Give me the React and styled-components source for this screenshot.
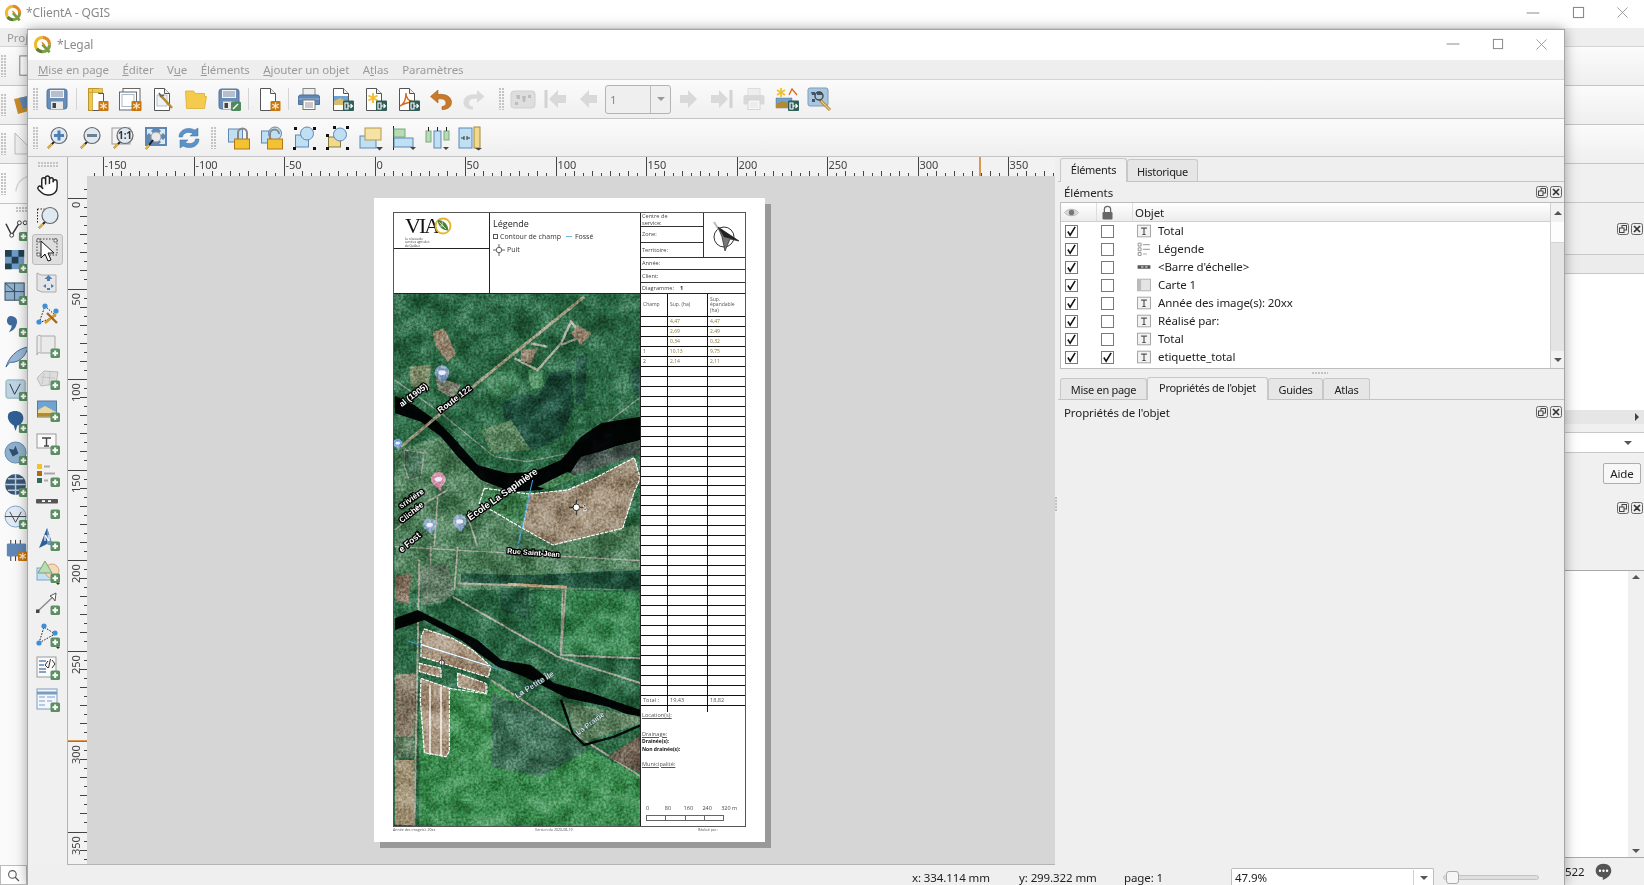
import React from "react";
import styled, { createGlobalStyle } from "styled-components";
import { Hand } from "lucide-react";

const GlobalStyle = createGlobalStyle`
  html, body { margin: 0; padding: 0; background: #efefef; overflow: hidden; }
  body { font-family: "Noto Sans", "Liberation Sans", sans-serif; font-size: 11.5px; letter-spacing: -0.1px; color: #222; }
  * { box-sizing: border-box; }
`;

/* ---------- window shells ---------- */
const Desktop = styled.div`
  position: relative;
  width: 1644px;
  height: 885px;
  overflow: hidden;
`;
const BaseWindow = styled.div`
  display: flex;
  flex-direction: column;
  width: 1644px;
  height: 885px;
  background: #f0f0f0;
`;
const TitleBar = styled.div`
  display: flex;
  align-items: center;
  background: #fff;
  height: ${(p) => p.$h}px;
  flex: none;
  padding-left: ${(p) => p.$pad}px;
  padding-bottom: ${(p) => p.$pb || 0}px;
  gap: ${(p) => p.$gap}px;
  color: #8b8b8b;
  font-size: 12px;
`;
const TitleText = styled.span`
  flex: 1;
`;
const WinButtons = styled.div`
  display: flex;
  align-items: center;
  gap: ${(p) => p.$gap}px;
  padding-right: ${(p) => p.$right}px;
`;
const Menu = styled.div`
  display: flex;
  align-items: center;
  flex: none;
  height: ${(p) => p.$h}px;
  background: #eeeeee;
  border-bottom: 1px solid #d4d4d4;
  color: #9a9a9a;
  padding-left: ${(p) => p.$pad}px;
`;
const MenuItem = styled.span`
  margin-right: ${(p) => p.$gap}px;
  u { text-underline-offset: 1px; }
`;
const BaseBand = styled.div`
  flex: none;
  height: 39px;
  background: linear-gradient(#fbfbfb, #efefef);
  border-bottom: 1px solid #c4c4c4;
  display: flex;
  align-items: center;
  padding-left: 1px;
  gap: ${(p) => p.$gap}px;
`;
const BaseMain = styled.div`
  flex: 1;
  display: flex;
  min-height: 0;
`;
const BaseLeft = styled.div`
  width: 120px;
  flex: none;
  display: flex;
  flex-direction: column;
  align-items: flex-start;
  background: linear-gradient(90deg, #fafafa, #efefef);
`;
const LeftBand = styled.div`
  width: 100%;
  height: 40px;
  flex: none;
  display: flex;
  align-items: center;
  gap: 8px;
  padding-left: 1px;
  border-bottom: 1px solid #c4c4c4;
`;
const BaseLeftHandle = styled.div`
  width: 12px;
  height: 6px;
  margin: 3px 0 0 16px;
  flex: none;
  background-image: radial-gradient(circle at 1px 1px, #c4c4c4 0.8px, transparent 0.9px);
  background-size: 3px 3px;
`;
const BaseLeftIcon = styled.div`
  height: 32px;
  padding-left: 5px;
  display: flex;
  align-items: center;
`;
const BaseSpacer = styled.div`
  flex: 1;
`;
const BaseDock = styled.div`
  width: 80px;
  flex: none;
  display: flex;
  flex-direction: column;
`;
const BaseDockBlock = styled.div`
  flex: none;
  height: ${(p) => p.$h}px;
  background: ${(p) => p.$bg || "#f0f0f0"};
  border-top: ${(p) => (p.$line ? "1px solid #c8c8c8" : "none")};
  border-bottom: ${(p) => (p.$under ? "1px solid #c8c8c8" : "none")};
  display: flex;
  align-items: center;
  justify-content: flex-end;
  gap: ${(p) => p.$gap || 0}px;
  padding-right: ${(p) => p.$right ?? 3}px;
`;
const AideBtn = styled.div`
  width: 38px;
  height: 21px;
  border: 1px solid #adadad;
  border-radius: 2px;
  background: #f7f7f7;
  text-align: center;
  line-height: 19px;
  color: #222;
`;
const BaseTextArea = styled.div`
  flex: none;
  height: 288px;
  background: #fff;
  border-top: 1px solid #aaa;
  border-bottom: 1px solid #aaa;
  display: flex;
  justify-content: flex-end;
`;
const ThinScroll = styled.div`
  width: 16px;
  background: #f0f0f0;
  display: flex;
  flex-direction: column;
  justify-content: space-between;
  align-items: center;
  padding: 4px 0;
`;
const BaseStatus = styled.div`
  flex: none;
  height: 27px;
  display: flex;
  align-items: center;
  color: #222;
  padding-left: 1px;
  gap: 11px;
`;
const SideArrow = styled.span`
  width: 0;
  height: 0;
  border-top: 4px solid transparent;
  border-bottom: 4px solid transparent;
  border-left: 4px solid #444;
`;
const SearchBox = styled.div`
  position: absolute;
  left: 0;
  top: 865px;
  width: 27px;
  height: 20px;
  border: 1px solid #bbb;
  background: #fff;
  display: flex;
  align-items: center;
  justify-content: center;
`;

const LayoutWindow = styled.div`
  position: absolute;
  left: 27px;
  top: 29px;
  width: 1538px;
  height: 856px;
  border: 1px solid #a6a6a6;
  border-bottom: none;
  background: #efefef;
  box-shadow: 0 0 12px rgba(0, 0, 0, 0.35);
  display: flex;
  flex-direction: column;
`;

/* ---------- toolbars ---------- */
const Toolbar = styled.div`
  display: flex;
  align-items: center;
  flex: none;
  height: ${(p) => p.$h}px;
  padding-left: 3px;
  background: linear-gradient(#fbfbfb, #efefef);
  border-bottom: 1px solid #c4c4c4;
`;
const Handle = styled.div`
  width: ${(p) => p.$w}px;
  height: 22px;
  flex: none;
  display: flex;
  justify-content: ${(p) => (p.$end ? "flex-end" : "center")};
  padding-right: ${(p) => p.$pr || 0}px;
  &::before {
    content: "";
    width: 5px;
    height: 100%;
    background-image: radial-gradient(circle at 1px 1px, #c4c4c4 0.8px, transparent 0.9px);
    background-size: 3px 3px;
  }
`;
const Sep = styled.div`
  width: 7px;
  height: 22px;
  flex: none;
  display: flex;
  justify-content: center;
  &::before { content: ""; width: 1px; background: #d4d4d4; }
`;
const ToolBtn = styled.div`
  width: 33px;
  height: 32px;
  flex: none;
  display: flex;
  align-items: center;
  justify-content: center;
`;
const PageCombo = styled.div`
  width: 66px;
  height: 29px;
  flex: none;
  display: flex;
  border: 1px solid #b4b4b4;
  border-radius: 3px;
  background: #efefef;
  color: #9a8a5a;
  align-items: center;
`;
const ComboValue = styled.span`
  flex: 1;
  padding-left: 4px;
`;
const ComboDrop = styled.span`
  width: 20px;
  height: 100%;
  border-left: 1px solid #bdbdbd;
  display: flex;
  align-items: center;
  justify-content: center;
`;
const Caret = styled.span`
  width: 0;
  height: 0;
  border-left: 4px solid transparent;
  border-right: 4px solid transparent;
  border-top: 4px solid ${(p) => p.$c || "#555"};
`;

/* ---------- work area ---------- */
const MainRow = styled.div`
  flex: 1;
  display: flex;
  min-height: 0;
`;
const ToolColumn = styled.div`
  width: 40px;
  flex: none;
  display: flex;
  flex-direction: column;
  align-items: center;
  border-right: 1px solid #b4b4b4;
  background: #f0f0f0;
  padding-top: 5px;
`;
const ToolHandle = styled.div`
  width: 20px;
  height: 6px;
  margin-bottom: 2px;
  background-image: radial-gradient(circle at 1px 1px, #c4c4c4 0.8px, transparent 0.9px);
  background-size: 3px 3px;
`;
const SideTool = styled.div`
  width: 31px;
  height: 31px;
  margin-bottom: 1.15px;
  flex: none;
  display: flex;
  align-items: center;
  justify-content: center;
  border-radius: 3px;
  border: 1px solid ${(p) => (p.$on ? "#bcbcbc" : "transparent")};
  background: ${(p) => (p.$on ? "#dedede" : "transparent")};
`;
const Center = styled.div`
  width: 987px;
  flex: none;
  display: flex;
  flex-direction: column;
`;
const RulerRow = styled.div`
  display: flex;
  height: 19px;
  flex: none;
`;
const Corner = styled.div`
  width: 19px;
  flex: none;
  background: #f2f2f2;
`;
const RulerSvg = styled.svg`
  display: block;
  flex: none;
  background: #f2f2f2;
  font-family: "Noto Sans", sans-serif;
`;
const CanvasRow = styled.div`
  flex: 1;
  display: flex;
  min-height: 0;
  border-bottom: 1px solid #b4b4b4;
`;
const Canvas = styled.div`
  width: 968px;
  flex: none;
  background: #d6d6d6;
  padding: 22px 0 0 287px;
  overflow: hidden;
`;
const DockSplit = styled.div`
  width: 3px;
  flex: none;
  display: flex;
  align-items: center;
`;
const SplitGrip = styled.span`
  width: 3px;
  height: 14px;
  margin-bottom: 14px;
  background-image: radial-gradient(circle at 1px 1px, #c0c0c0 0.8px, transparent 0.9px);
  background-size: 3px 3px;
`;

/* ---------- printed page ---------- */
const Page = styled.div`
  width: 391px;
  height: 644px;
  background: #fff;
  box-shadow: 6px 6px 0 #999;
  padding: 14px 19px 0 19px;
  font-family: "Open Sans", sans-serif;
  letter-spacing: 0;
  color: #333;
`;
const Sheet = styled.div`
  width: 353px;
  height: 615px;
  display: flex;
  flex-direction: column;
  border: 1px solid #555;
`;
const SheetHead = styled.div`
  height: 81px;
  flex: none;
  display: flex;
  border-bottom: 1px solid #222;
`;
const LogoCol = styled.div`
  width: 96px;
  flex: none;
  border-right: 1px solid #222;
  display: flex;
  flex-direction: column;
`;
const LogoCell = styled.div`
  height: 36px;
  flex: none;
  border-bottom: 1px solid #222;
  padding-left: 11px;
  display: flex;
  flex-direction: column;
  line-height: 1;
`;
const LogoRow = styled.div`
  display: flex;
  align-items: center;
  height: 25px;
  flex: none;
`;
const LogoMark = styled.span`
  font-family: "Liberation Serif", serif;
  font-size: 22px;
  line-height: 25px;
  letter-spacing: -2px;
  color: #111;
`;
const LogoLeaf = styled.span`
  margin: 0 0 0 -4px;
`;
const LogoLine = styled.div`
  font-size: 3px;
  line-height: 3.3px;
  color: #333;
  white-space: nowrap;
`;
const LegendCol = styled.div`
  width: 151px;
  flex: none;
  border-right: 1px solid #222;
  padding: 5px 0 0 3px;
`;
const LegendTitle = styled.div`
  font-size: 9px;
  line-height: 12px;
  color: #222;
`;
const LegendRow = styled.div`
  display: flex;
  align-items: center;
  gap: 2px;
  font-size: 7px;
  line-height: 10px;
  height: ${(p) => p.$h || 13}px;
  color: #333;
`;
const FossLine = styled.span`
  width: 6px;
  height: 1px;
  background: #6fb7e0;
  margin: 0 1px 0 3px;
`;
const CheckMini = styled.span`
  width: 5px;
  height: 5px;
  border: 0.6px dashed #555;
  flex: none;
`;
const InfoCol = styled.div`
  flex: 1;
  display: flex;
  flex-direction: column;
  min-width: 0;
`;
const InfoTop = styled.div`
  height: 45px;
  flex: none;
  display: flex;
`;
const InfoLeft = styled.div`
  width: 63px;
  flex: none;
  display: flex;
  flex-direction: column;
  border-right: 1px solid #333;
`;
const InfoCell = styled.div`
  height: ${(p) => p.$h}px;
  flex: none;
  border-bottom: ${(p) => (p.$open ? "none" : "1px solid #333")};
  font-size: 5.6px;
  line-height: 6.5px;
  padding-left: 1px;
  color: #444;
  display: flex;
  align-items: center;
`;
const NorthCell = styled.div`
  flex: 1;
  display: flex;
  align-items: center;
  justify-content: center;
  border-bottom: 1px solid #333;
`;
const StrongNum = styled.b`
  margin-left: 6px;
  color: #222;
`;
const SheetBody = styled.div`
  flex: 1;
  display: flex;
  min-height: 0;
`;
const MapSvg = styled.svg`
  display: block;
  width: 246px;
  height: 532px;
  flex: none;
  font-family: "Liberation Sans", sans-serif;
`;
const NoiseRect = styled.rect`
  mix-blend-mode: ${(p) => p.$mode || "overlay"};
  opacity: ${(p) => p.$op || 1};
`;
const SideInfo = styled.div`
  flex: 1;
  border-left: 1px solid #222;
  display: flex;
  flex-direction: column;
  min-width: 0;
`;
const TableRow = styled.div`
  display: grid;
  grid-template-columns: 27px 40px 1fr;
  height: ${(p) => p.$h || 9.97}px;
  flex: none;
  border-bottom: ${(p) => (p.$open ? "none" : "1px solid #111")};
  font-size: 5px;
  line-height: 5.5px;
  color: #666;
`;
const TableCell = styled.div`
  border-right: ${(p) => (p.$last ? "none" : "1px solid #111")};
  padding: 0 0 0 2px;
  display: flex;
  align-items: center;
  color: ${(p) => p.$c || "#555"};
  font-size: ${(p) => p.$fs || 5}px;
`;
const SideNotes = styled.div`
  flex: 1;
  padding: 0 0 0 1px;
  font-size: 5.6px;
  line-height: 7px;
  color: #555;
  display: flex;
  flex-direction: column;
`;
const NoteLine = styled.div`
  margin-top: ${(p) => p.$mt || 0}px;
  font-weight: ${(p) => (p.$b ? 700 : 400)};
  color: ${(p) => (p.$b ? "#111" : "#555")};
  text-decoration: ${(p) => (p.$u ? "underline" : "none")};
  font-size: ${(p) => (p.$b ? 5 : 5.6)}px;
`;
const ScaleLabels = styled.div`
  margin: auto 0 0 4px;
  display: flex;
  font-size: 5.5px;
  color: #444;
  height: 8px;
  line-height: 8px;
`;
const ScaleLabel = styled.span`
  width: 18.8px;
`;
const ScaleBar = styled.div`
  margin: 3px 0 5px 4px;
  width: 78px;
  height: 6px;
  display: flex;
  border: 0.7px solid #666;
`;
const ScaleSeg = styled.span`
  flex: 1;
  border-right: 0.7px solid #666;
  &:last-child { border-right: none; }
`;
const PageFoot = styled.div`
  width: 353px;
  display: grid;
  grid-template-columns: 142px 163px 1fr;
  font-size: 3.6px;
  line-height: 6px;
  color: #555;
`;

/* ---------- right dock ---------- */
const Dock = styled.div`
  width: 506px;
  flex: none;
  display: flex;
  flex-direction: column;
  padding-top: 1px;
`;
const TabRow = styled.div`
  display: flex;
  align-items: flex-end;
  height: ${(p) => p.$h}px;
  flex: none;
  padding-left: 2px;
  border-bottom: 1px solid #c4c4c4;
`;
const Tab = styled.div`
  width: ${(p) => p.$w}px;
  height: ${(p) => (p.$on ? p.$hOn : p.$hOn - 2)}px;
  flex: none;
  background: ${(p) => (p.$on ? "#f0f0f0" : "#e6e6e6")};
  border: 1px solid #c8c8c8;
  border-bottom: none;
  border-radius: 3px 3px 0 0;
  text-align: center;
  font-size: 11px;
  letter-spacing: -0.3px;
  line-height: ${(p) => (p.$on ? p.$hOn - 3 : p.$hOn - 1)}px;
  color: #222;
  margin-bottom: ${(p) => (p.$on ? -1 : 0)}px;
`;
const PanelHead = styled.div`
  height: ${(p) => p.$h}px;
  flex: none;
  display: flex;
  align-items: center;
  padding: 0 2px 0 6px;
  color: #222;
`;
const PanelName = styled.span`
  flex: 1;
`;
const PanelBtns = styled.div`
  display: flex;
  gap: 2px;
`;
const Tree = styled.div`
  margin-left: 2px;
  height: 167px;
  flex: none;
  border: 1px solid #bdbdbd;
  border-right: none;
  background: #fff;
  display: flex;
`;
const TreeMain = styled.div`
  flex: 1;
  display: flex;
  flex-direction: column;
`;
const TreeHead = styled.div`
  display: grid;
  grid-template-columns: 36px 36px 1fr;
  height: 19px;
  flex: none;
  background: linear-gradient(#fff, #ececec);
  border-bottom: 1px solid #cfcfcf;
`;
const HeadCell = styled.div`
  display: flex;
  align-items: center;
  padding-left: ${(p) => p.$pl}px;
  border-right: ${(p) => (p.$txt ? "none" : "1px solid #ddd")};
`;
const TreeRow = styled.div`
  display: grid;
  grid-template-columns: 36px 36px 25px 1fr;
  height: 18px;
  flex: none;
  align-items: center;
  color: #222;
`;
const RowName = styled.span`
  margin-top: -2px;
`;
const CheckCell = styled.div`
  display: flex;
  padding-left: ${(p) => p.$pl}px;
`;
const CheckBox = styled.span`
  width: 13px;
  height: 13px;
  border: 1px solid #7a7a7a;
  background: #fff;
  display: flex;
  align-items: center;
  justify-content: center;
`;
const RowIcon = styled.div`
  display: flex;
  padding-left: 4px;
`;
const TreeScroll = styled.div`
  width: 14px;
  flex: none;
  display: flex;
  flex-direction: column;
  background: #e4e4e4;
  border-left: 1px solid #d0d0d0;
`;
const ScrollBtn = styled.div`
  height: ${(p) => p.$h}px;
  flex: none;
  background: #f2f2f2;
  display: flex;
  align-items: center;
  justify-content: center;
`;
const ScrollThumb = styled.div`
  height: 21px;
  flex: none;
  background: #fdfdfd;
  border-bottom: 1px solid #d5d5d5;
`;
const ScrollTrack = styled.div`
  flex: 1;
`;
const UpCaret = styled.span`
  width: 0;
  height: 0;
  border-left: 4px solid transparent;
  border-right: 4px solid transparent;
  border-bottom: 4px solid #555;
`;
const SplitDots = styled.div`
  height: 8px;
  flex: none;
  margin-left: 254px;
  width: 16px;
  background-image: radial-gradient(circle at 1px 4px, #c0c0c0 0.7px, transparent 0.8px);
  background-size: 3px 8px;
`;
const DockFill = styled.div`
  flex: 1;
`;

/* ---------- status bar ---------- */
const Status = styled.div`
  height: 20px;
  flex: none;
  display: flex;
  align-items: flex-start;
  color: #222;
  padding-top: 3px;
`;
const StatusText = styled.span`
  width: ${(p) => p.$w}px;
  flex: none;
  margin: 2px 0 0 ${(p) => p.$ml || 0}px;
  line-height: 15px;
  white-space: nowrap;
`;
const ZoomCombo = styled.div`
  width: 203px;
  height: 17px;
  flex: none;
  border: 1px solid #bdbdbd;
  border-bottom: none;
  border-radius: 2px 2px 0 0;
  background: #fff;
  display: flex;
  align-items: flex-start;
  padding: 1px 0 0 3px;
  line-height: 15px;
`;
const ZoomValue = styled.span`
  flex: 1;
`;
const ZoomDrop = styled.span`
  width: 20px;
  height: 100%;
  border-left: 1px solid #d0d0d0;
  display: flex;
  justify-content: center;
  padding-top: 6px;
`;
const SliderTrack = styled.div`
  position: relative;
  width: 96px;
  height: 5px;
  flex: none;
  margin: 7px 0 0 9px;
  background: #dedede;
  border: 1px solid #c4c4c4;
  border-radius: 3px;
`;
const SliderThumb = styled.span`
  position: absolute;
  left: 2px;
  top: -5px;
  width: 13px;
  height: 13px;
  background: #f6f6f6;
  border: 1px solid #aaa;
  border-radius: 3px;
`;

/* ---------- icons ---------- */
const IconSvg = styled.svg`
  display: block;
  flex: none;
  overflow: visible;
`;
const Ic = ({ s = 24, children }) => (
  <IconSvg width={s} height={s} viewBox="0 0 24 24">
    {children}
  </IconSvg>
);

const Plus = () => (
  <g>
    <rect x="14.5" y="14.5" width="9.5" height="9.5" rx="1.6" fill="#5b8f60" />
    <path d="M19.2 16.5v5.5M16.5 19.2h5.5" stroke="#fff" strokeWidth="2" />
  </g>
);
const Gear = () => (
  <g>
    <rect x="13.5" y="14" width="10" height="10" rx="1" fill="#c9750e" />
    <path d="M18.5 15.5v7M15.2 17l6.6 4M15.2 21l6.6-4" stroke="#f7e6c8" strokeWidth="1.3" />
  </g>
);
const Export = () => (
  <g>
    <rect x="13" y="13.5" width="11" height="10.5" rx="1" fill="#2f5d58" />
    <path d="M15 16h3v6h-3zM18.5 19h4M20.5 17l2 2-2 2" fill="none" stroke="#fff" strokeWidth="1.1" />
  </g>
);
const Doc = ({ c = "#555" }) => (
  <g>
    <path d="M3.5 1.5h10l5 5v17h-15z" fill="#fff" stroke={c} />
    <path d="M13.5 1.5v5h5" fill="#eee" stroke={c} />
  </g>
);
const Floppy = () => (
  <g>
    <rect x="2" y="2" width="20" height="20" rx="2.5" fill="#6a8db8" stroke="#52729c" />
    <rect x="5" y="3" width="14" height="8" fill="#f2f2f2" />
    <path d="M6 5h12M6 7h12M6 9h12" stroke="#7a8ea5" />
    <rect x="6" y="14.5" width="12" height="7.5" fill="#e8e8e8" />
    <rect x="7.5" y="16" width="3.5" height="5" fill="#444" />
  </g>
);
const Lens = ({ children }) => (
  <g>
    <path d="M11 14 3 22" stroke="#222" strokeWidth="2" />
    <path d="M7 18 3 22" stroke="#e5b53c" strokeWidth="2.2" />
    <circle cx="14" cy="9.5" r="8" fill="#dfe9f2" stroke="#666" strokeWidth="1.2" />
    {children}
  </g>
);
const Pic = () => (
  <g>
    <rect x="1.5" y="3" width="19" height="16" fill="#6fa3d2" stroke="#5a7a9a" />
    <path d="M2 12 9 8l11 6v4.5H2z" fill="#e9d9a0" />
    <path d="M2 15h18.5v3.6H2z" fill="#b38a2f" />
  </g>
);

const icons = {
  save: <Floppy />,
  layoutNew: (
    <>
      <Doc />
      <path d="M3.5 1.5h4v22h-4zM3.5 1.5h14v4h-14z" fill="#f1c84a" stroke="#c19a2a" strokeWidth=".7" />
      <Gear />
    </>
  ),
  dup: (
    <>
      <rect x="5" y="1.5" width="17" height="17" fill="#fff" stroke="#666" />
      <rect x="1.5" y="5" width="17" height="18" fill="#fff" stroke="#666" />
      <rect x="4" y="7.5" width="12" height="12" fill="#fff" stroke="#a8bcd0" />
      <Gear />
    </>
  ),
  manager: (
    <>
      <Doc />
      <rect x="6" y="8" width="10" height="11" fill="#eef3f8" stroke="#89a" strokeWidth=".6" />
      <path d="M9 8l3 3 9 10" fill="none" stroke="#b78c2d" strokeWidth="2.6" />
      <path d="M8 6l2 3 3-1" fill="none" stroke="#666" strokeWidth="1.6" />
    </>
  ),
  open: <path d="M1.5 4h8l2 2.5h9v3l2 0-2 12H2.5z" fill="#f4cb4d" stroke="#d9ac32" strokeWidth=".8" />,
  saveAs: (
    <>
      <Floppy />
      <rect x="14" y="14.5" width="10" height="9.5" rx="1.5" fill="#4e8a5c" />
      <path d="M16 22l5-5" stroke="#fff" strokeWidth="1.5" />
    </>
  ),
  newDoc: (
    <>
      <Doc />
      <Gear />
    </>
  ),
  print: (
    <>
      <rect x="6" y="1.5" width="12" height="8" fill="#eee" stroke="#888" />
      <path d="M1.5 10a2 2 0 0 1 2-2h17a2 2 0 0 1 2 2v7.5h-21z" fill="#5f87b5" stroke="#4d6f99" />
      <path d="M1.5 12h21" stroke="#9db7d4" />
      <rect x="6" y="13" width="12" height="9.5" fill="#fff" stroke="#777" />
      <path d="M8 16h8M8 18h8M8 20h8" stroke="#777" strokeWidth=".8" />
    </>
  ),
  expImg: (
    <>
      <Doc />
      <path d="M4 9h14v9H4z" fill="#6fa3d2" />
      <path d="M4 14l6-3 8 4v3H4z" fill="#d8bd6e" />
      <Export />
    </>
  ),
  expSvg: (
    <>
      <Doc />
      <path d="M10 6v10M5.5 8.5l9 5M5.5 13.5l9-5" stroke="#f3be2c" strokeWidth="2" />
      <Export />
    </>
  ),
  expPdf: (
    <>
      <Doc />
      <path d="M4 19c4-2 6-7 6-13 0 5 2 8 8 9-5 0-9 1-14 4z" fill="none" stroke="#d96a1c" strokeWidth="1.4" />
      <Export />
    </>
  ),
  undo: <path d="M9 3 1.5 9.5 9 16v-4c5-.6 8 .8 8 4 0 2.2-1.5 3.2-4 3.6v3c6 0 9.5-3 9.5-7.4C22.5 10 17 6.5 9 7.5z" fill="#c8792a" stroke="#a55f1a" strokeWidth=".6" />,
  redo: <path d="M15 3l7.5 6.5L15 16v-4c-5-.6-8 .8-8 4 0 2.2 1.5 3.2 4 3.6v3c-6 0-9.500-3-9.500-7.400C1.500 10 7 6.500 15 7.500z" fill="#dadada" />,
  atlas: (
    <>
      <rect x="0" y="4" width="24" height="17" rx="3" fill="#dedede" stroke="#d0d0d0" />
      <path d="M5 8h4v4H6zM11 9h4l-1 6h-2zM17 8h3v3h-3zM4 15h3v3H4z" fill="#bdbdbd" />
    </>
  ),
  first: (
    <>
      <path d="M2 3v18" stroke="#d2d2d2" strokeWidth="3" />
      <path d="M5 12l9-9v5h8v8h-8v5z" fill="#d9d9d9" />
    </>
  ),
  prev: <path d="M3 12l9-9v5h8v8h-8v5z" fill="#d9d9d9" />,
  next: <path d="M21 12l-9-9v5H4v8h8v5z" fill="#d9d9d9" />,
  last: (
    <>
      <path d="M22 3v18" stroke="#d2d2d2" strokeWidth="3" />
      <path d="M19 12l-9-9v5H2v8h8v5z" fill="#d9d9d9" />
    </>
  ),
  printOff: (
    <>
      <rect x="6" y="1.5" width="12" height="8" fill="#eee" stroke="#ddd" />
      <path d="M1.5 10a2 2 0 0 1 2-2h17a2 2 0 0 1 2 2v7.5h-21z" fill="#d9d9d9" />
      <rect x="6" y="13" width="12" height="9.5" fill="#f7f7f7" stroke="#d4d4d4" />
      <path d="M8 16h8M8 18h8M8 20h8" stroke="#ddd" strokeWidth=".8" />
    </>
  ),
  expAtlas: (
    <>
      <path d="M1 11h16v10H1z" fill="#6fa3d2" stroke="#557" strokeWidth=".4" />
      <path d="M1 17l6-3 10 3v4H1z" fill="#b38a2f" />
      <path d="M6 1v9M2 3l8 5M2 8l8-5" stroke="#f3be2c" strokeWidth="1.7" />
      <path d="M14 8l3-6 5 6" fill="none" stroke="#d96a1c" strokeWidth="1.3" />
      <Export />
    </>
  ),
  atlasCfg: (
    <>
      <rect x="0" y="1" width="20" height="18" rx="2" fill="#a9c6df" stroke="#7c9cba" />
      <path d="M3 5h4v3H4zM9 5h5v3H9zM4 12h3v3H4z" fill="#41566b" />
      <path d="M12 13l10 10" stroke="#b07b22" strokeWidth="3" />
      <path d="M13 14l9 9" stroke="#eec887" strokeWidth="1.3" />
      <circle cx="11" cy="9" r="4" fill="none" stroke="#444" strokeWidth="1.4" />
    </>
  ),
  zoomIn: (
    <Lens>
      <path d="M14 4.500v10M9 9.500h10" stroke="#4f7fb5" strokeWidth="3" />
    </Lens>
  ),
  zoomOut: (
    <Lens>
      <path d="M9 9.500h10" stroke="#6f7f90" strokeWidth="3" />
    </Lens>
  ),
  zoom100: (
    <>
      <rect x="1" y="2" width="18" height="16" fill="#f4f4f4" stroke="#999" />
      <Lens />
      <text x="14" y="13" fontSize="10" fontWeight="700" textAnchor="middle" fill="#333">1:1</text>
    </>
  ),
  zoomFull: (
    <>
      <rect x="1" y="1" width="22" height="19" fill="#5f87b5" />
      <path d="M3 3l6 0-2 2 3 3-2 2-3-3-2 2zM21 3v6l-2-2-3 3-2-2 3-3-2-2zM21 18h-6l2-2-3-3 2-2 3 3 2-2z" fill="#dfe9f2" />
      <circle cx="12" cy="11" r="5" fill="#e9e9e9" stroke="#999" />
      <path d="M9 14 2 23" stroke="#222" strokeWidth="2" />
      <path d="M5 19l-3 4" stroke="#e5b53c" strokeWidth="2.2" />
    </>
  ),
  refresh: (
    <>
      <path d="M2 11C2 4 10 0 18 4l3-2v8h-8l3-2.500C11 5 6 7 5.500 11z" fill="#5b92c9" stroke="#3e6f9f" strokeWidth=".5" />
      <path d="M22 13c0 7-8 11-16 7l-3 2v-8h8l-3 2.500c5 2.500 10 .5 10.500-3.500z" fill="#5b92c9" stroke="#3e6f9f" strokeWidth=".5" />
    </>
  ),
  lock: (
    <>
      <rect x="1.500" y="3" width="14" height="13" fill="#bfe0f2" stroke="#5f87b5" />
      <path d="M11 13V7a4.500 4.500 0 0 1 9 0v6" fill="none" stroke="#888" strokeWidth="2" />
      <rect x="7.500" y="13" width="15" height="10" fill="#f1c232" stroke="#b8741a" />
    </>
  ),
  unlock: (
    <>
      <rect x="1.500" y="5" width="12" height="12" fill="#bfe0f2" stroke="#5f87b5" />
      <circle cx="15" cy="7.500" r="6.500" fill="#bfe0f2" stroke="#5f87b5" />
      <path d="M10 13V8a4.500 4.500 0 0 1 9 0" fill="none" stroke="#888" strokeWidth="2" />
      <rect x="7.500" y="13" width="15" height="10" fill="#f1c232" stroke="#b8741a" />
    </>
  ),
  group: (
    <>
      <rect x="2.500" y="9" width="13" height="12" fill="#bfe0f2" stroke="#5f87b5" />
      <circle cx="14" cy="7.500" r="6.500" fill="#bfe0f2" stroke="#5f87b5" />
      <path d="M0 21h3v3H0zM20 21h3v3h-3zM1 1h3v3H1zM20 1h3v3h-3z" fill="#111" />
    </>
  ),
  ungroup: (
    <>
      <rect x="2.500" y="11" width="12" height="10" fill="#f0d98a" stroke="#8a7a3a" />
      <circle cx="14" cy="8.500" r="6.500" fill="#bfe0f2" stroke="#5f87b5" />
      <path d="M0 8h3v3H0zM0 21h3v3H0zM20 21h3v3h-3zM7 0h3v3H7zM20 0h3v3h-3z" fill="#111" />
    </>
  ),
  raise: (
    <>
      <rect x="1" y="10" width="16" height="12" fill="#bfe0f2" stroke="#5f87b5" />
      <rect x="6" y="2" width="16" height="12" fill="#f5e3a5" stroke="#b49a4a" />
      <path d="M17 21h7l-3.500 3.500z" fill="#444" />
    </>
  ),
  align: (
    <>
      <path d="M1.500 0v24" stroke="#222" />
      <rect x="2" y="3" width="11" height="8" fill="#b6dcb6" stroke="#7aa87a" />
      <rect x="2" y="12" width="19" height="9" fill="#bfe0f2" stroke="#5f87b5" />
      <path d="M18 21h6l-3 3z" fill="#444" />
    </>
  ),
  dist: (
    <>
      <rect x="1" y="5" width="5" height="11" fill="#b6dcb6" stroke="#7aa87a" />
      <rect x="9" y="5" width="7" height="17" fill="#bfe0f2" stroke="#5f87b5" />
      <rect x="19" y="5" width="5" height="9" fill="#b6dcb6" stroke="#7aa87a" />
      <path d="M3.500 1v4M12.500 1v4M21.500 1v4" stroke="#222" />
      <path d="M18 21h6l-3 3z" fill="#444" />
    </>
  ),
  resize: (
    <>
      <rect x="1" y="2" width="13" height="20" fill="#bfe0f2" stroke="#5f87b5" />
      <rect x="16" y="1" width="6" height="21" fill="#f0d98a" stroke="#a08a3a" />
      <path d="M3 12h3M12 12H9M6 10v4M9 10v4" stroke="#333" />
      <path d="M17 22h7l-3.500 2.500z" fill="#444" />
    </>
  ),
  zoomTool: (
    <>
      <path d="M1.500 3h7M1.500 3v14" stroke="#222" strokeDasharray="1.500 1.500" fill="none" />
      <Lens />
    </>
  ),
  select: (
    <>
      <path d="M1 1h20v16H1z" fill="none" stroke="#444" strokeDasharray="1.500 1.500" />
      <path d="M1 1h3v3H1zM18 1h3v3h-3zM1 15h3v3H1z" fill="#f4f4f4" stroke="#444" strokeWidth=".7" />
      <path d="M5 3v17l4-4 3 7 3-1-3-7h6z" fill="#fff" stroke="#111" />
    </>
  ),
  moveContent: (
    <>
      <path d="M1 3l4 2h15v17H6l-5-2z" fill="#e5e5e5" stroke="#aaa" />
      <path d="M12.500 5l4 4h-2.500v2h-3V9H8.500zM7 16l3-2v4zM18 16l-3-2v4zM11 20h3v-2h-3z" fill="#4b7fb2" />
    </>
  ),
  editNodes: (
    <>
      <path d="M3 21 9 4l11 10z" fill="none" stroke="#222" strokeDasharray="1.600 1.300" />
      <circle cx="9" cy="4" r="2.600" fill="#3d8fd8" />
      <circle cx="20" cy="9" r="2.600" fill="#3d8fd8" />
      <circle cx="3" cy="20" r="2.600" fill="#3d8fd8" />
      <path d="M9 21l11-9" stroke="#d79a2a" strokeWidth="2.600" />
      <path d="M11 11l10 10" stroke="#a56a1a" strokeWidth="2.400" />
    </>
  ),
  addMap: (
    <>
      <path d="M1 3c0-2 3-2 4-1h14v17H5c-2-1-4 0-4 2z" fill="#eaeaea" stroke="#a8a8a8" />
      <path d="M5 2v16" stroke="#bbb" />
      <Plus />
    </>
  ),
  add3d: (
    <>
      <path d="M1 12l7-7 14 1 -2 12-15 2z" fill="#ddd" stroke="#bbb" />
      <path d="M5 11l14 1M8 7l-2 11M14 6l-1 13" stroke="#bbb" strokeWidth=".7" />
      <Plus />
    </>
  ),
  addPic: (
    <>
      <Pic />
      <Plus />
    </>
  ),
  addLabel: (
    <>
      <rect x="1" y="3" width="19" height="14" fill="#fafafa" stroke="#999" />
      <path d="M6 7h9M10.500 7v8M8 15h5" stroke="#444" strokeWidth="1.400" />
      <Plus />
    </>
  ),
  addLegend: (
    <>
      <rect x="1" y="1" width="5" height="5" fill="#f2c12e" />
      <rect x="1" y="8" width="5" height="5" fill="#b9650f" />
      <rect x="1" y="15" width="5" height="5" fill="#2f6e55" />
      <path d="M8 3.500h6M8 10.500h11M8 17.500h4" stroke="#aaa" strokeWidth="2" />
      <Plus />
    </>
  ),
  addScale: (
    <>
      <rect x="0" y="4" width="22" height="4.500" rx="1" fill="#555" />
      <path d="M6 6.200h3M12 6.200h3" stroke="#fff" strokeWidth="1.800" />
      <Plus />
    </>
  ),
  addNorth: (
    <>
      <path d="M11 1 3 21l8-4 6 2z" fill="#2f5f9a" />
      <path d="M11 1l6 18-6-2z" fill="#6c96c4" />
      <text x="11" y="14" fontSize="8" fill="#fff" textAnchor="middle" fontWeight="700">N</text>
      <Plus />
    </>
  ),
  addShape: (
    <>
      <rect x="1" y="9" width="16" height="12" fill="#c5e0f2" stroke="#7ba6cc" />
      <circle cx="16" cy="12" r="7" fill="#f5d9b8" stroke="#d4a27a" />
      <path d="M9 2l7 12H2z" fill="#b9dcb0" stroke="#7ba07a" />
      <Plus />
      <path d="M20 24h4l-2 2z" fill="#333" />
    </>
  ),
  addArrow: (
    <>
      <path d="M2 20 19 4" stroke="#888" strokeWidth="1.300" />
      <path d="M20 2l-1 8-2-3-3-2z" fill="#fff" stroke="#555" />
      <rect x="0" y="18.500" width="3.500" height="3.500" fill="#444" />
      <Plus />
    </>
  ),
  addNode: (
    <>
      <path d="M3 20 8 4l11 7z" fill="none" stroke="#222" strokeDasharray="1.600 1.300" />
      <circle cx="8" cy="3" r="2.600" fill="#3d8fd8" />
      <circle cx="19" cy="10" r="2.600" fill="#3d8fd8" />
      <circle cx="3" cy="20" r="2.600" fill="#3d8fd8" />
      <Plus />
      <path d="M20 24h4l-2 2z" fill="#333" />
    </>
  ),
  addHtml: (
    <>
      <rect x="1" y="1" width="19" height="20" fill="#fafafa" stroke="#999" />
      <path d="M3 5h7M3 9h5M3 13h7M3 16h7" stroke="#5f87b5" strokeWidth="1.500" />
      <path d="M12 5 9 9l3 3M16 4l3 4-3 4M14.500 3l-2 9" fill="none" stroke="#333" />
      <Plus />
    </>
  ),
  addTable: (
    <>
      <rect x="1" y="1" width="20" height="20" fill="#f3f7fb" stroke="#7b9cc2" />
      <path d="M1 5h20" stroke="#7b9cc2" strokeWidth="3" />
      <path d="M3 9h6M11 9h8M3 13h6M11 13h5M3 17h6" stroke="#7b9cc2" />
      <Plus />
    </>
  ),
};

const Qgis = ({ s = 16 }) => (
  <IconSvg width={s} height={s} viewBox="0 0 24 24">
    <path d="M12 2a10 10 0 0 0 0 20" fill="none" stroke="#f0b92c" strokeWidth="4.500" />
    <path d="M12 2a10 10 0 0 1 10 10" fill="none" stroke="#e08b24" strokeWidth="4.500" />
    <path d="M22 12a10 10 0 0 1-10 10" fill="none" stroke="#7fa046" strokeWidth="4.500" />
    <path d="M4 18a10 10 0 0 0 8 4" fill="none" stroke="#55803d" strokeWidth="4.500" />
    <path d="M12 12l10 11" stroke="#7a9c3a" strokeWidth="4" />
    <path d="M11 9l4 4" stroke="#e08b24" strokeWidth="2" />
  </IconSvg>
);
const Minus = () => <Ic s={14}><path d="M1 12h22" stroke="#8a8a8a" strokeWidth="1.700" /></Ic>;
const Maxi = ({ s = 10 }) => <Ic s={s}><rect x="1" y="1" width="22" height="22" fill="none" stroke="#8a8a8a" strokeWidth="2.400" /></Ic>;
const Closer = () => <Ic s={11}><path d="M1 1l22 22M23 1 1 23" stroke="#8a8a8a" strokeWidth="1.800" /></Ic>;
const Float = () => (
  <Ic s={12}>
    <rect x="1" y="1" width="22" height="22" rx="4" fill="#eee" stroke="#666" strokeWidth="2" />
    <rect x="10" y="5" width="9" height="9" fill="none" stroke="#444" strokeWidth="2" />
    <rect x="5" y="10" width="9" height="9" fill="#eee" stroke="#444" strokeWidth="2" />
  </Ic>
);
const DockClose = () => (
  <Ic s={12}>
    <rect x="1" y="1" width="22" height="22" rx="4" fill="#eee" stroke="#666" strokeWidth="2" />
    <path d="M6 6l12 12M18 6 6 18" stroke="#333" strokeWidth="3.500" />
  </Ic>
);
const Tick = () => (
  <Ic s={11}>
    <path d="M4 12l5 8L20 2" fill="none" stroke="#111" strokeWidth="3.400" />
  </Ic>
);
const LabelItem = () => (
  <Ic s={14}>
    <rect x="1" y="2" width="22" height="20" fill="#f3f3f3" stroke="#999" strokeWidth="1.500" />
    <path d="M7 7h10M12 7v11M9 18h6" stroke="#555" strokeWidth="2" fill="none" />
  </Ic>
);
const LegendItem = () => (
  <Ic s={14}>
    <path d="M2 2h5v5H2zM2 10h5v5H2zM2 18h5v5H2z" fill="#fff" stroke="#888" strokeWidth="1.500" />
    <path d="M10 4.500h12M10 12.500h12M10 20.500h7" stroke="#aaa" strokeWidth="2" />
  </Ic>
);
const ScaleItem = () => (
  <Ic s={14}>
    <rect x="1" y="9" width="22" height="6" fill="#555" />
    <path d="M7 12h4M14 12h4" stroke="#fff" strokeWidth="2" />
  </Ic>
);
const MapItem = () => (
  <Ic s={14}>
    <rect x="1" y="2" width="22" height="20" fill="#e4e4e4" stroke="#aaa" strokeWidth="1.500" />
    <rect x="1" y="2" width="6" height="20" fill="#bbb" />
  </Ic>
);
const Eye = () => (
  <Ic s={15}>
    <path d="M1 12c5-7 17-7 22 0-5 7-17 7-22 0z" fill="#ddd" stroke="#999" />
    <circle cx="12" cy="12" r="4.500" fill="#777" />
  </Ic>
);
const Padlock = () => (
  <Ic s={15}>
    <path d="M7 12V7a5 5 0 0 1 10 0v5" fill="none" stroke="#666" strokeWidth="2" />
    <rect x="4" y="11" width="16" height="12" rx="2" fill="#666" />
  </Ic>
);
const WellMark = ({ s = 14 }) => (
  <Ic s={s}>
    <path d="M12 0v24M0 12h24" stroke="#333" strokeWidth="1.500" />
    <circle cx="12" cy="12" r="5.500" fill="#fff" stroke="#333" strokeWidth="1.500" />
  </Ic>
);
const NorthArrow = () => (
  <IconSvg width="30" height="34" viewBox="0 0 30 34">
    <circle cx="14" cy="19" r="10" fill="#fff" stroke="#333" />
    <path d="M4 4l5 8" stroke="#bbb" strokeWidth="2" />
    <path d="M8 9 29 23l-9-2-5 12-3-14z" fill="#777" stroke="#222" strokeWidth=".7" />
    <path d="M8 9 29 23l-15-4z" fill="#222" />
  </IconSvg>
);
const ViaLeaf = () => (
  <IconSvg width="18" height="18" viewBox="0 0 24 24">
    <circle cx="12" cy="12" r="10" fill="none" stroke="#e3b62d" strokeWidth="2.500" />
    <path d="M5 4c8 0 14 6 14 14C11 18 5 12 5 4z" fill="#4f7f3a" />
    <path d="M7 7l9 9M11 6v6M7 12h6" stroke="#e8efe0" />
  </IconSvg>
);
const MsgBubble = () => (
  <Ic s={17}>
    <path d="M12 1C5 1 1 5.500 1 11c0 5 4 9 10 9v4c6-2 12-7 12-13C23 5.500 19 1 12 1z" fill="#555" />
    <circle cx="7" cy="11" r="1.700" fill="#fff" />
    <circle cx="12" cy="11" r="1.700" fill="#fff" />
    <circle cx="17" cy="11" r="1.700" fill="#fff" />
  </Ic>
);
const SearchIc = () => (
  <Ic s={13}>
    <circle cx="10" cy="10" r="7" fill="none" stroke="#555" strokeWidth="2" />
    <path d="M15 15l7 7" stroke="#555" strokeWidth="2.500" />
  </Ic>
);

/* ---------- rulers ---------- */
const H_TICKS = Array.from({ length: 44 * 5 }, (_, i) => i * 5 - 205);
const HRuler = () => (
  <RulerSvg width="968" height="19" viewBox="0 0 968 19">
    {H_TICKS.map((mm) => {
      const x = Math.round(287.5 + mm * 1.81) + 0.5;
      if (x < 0 || x > 968) return null;
      const major = mm % 50 === 0;
      const len = major ? 19 : mm % 10 === 0 ? (mm % 25 === 0 ? 7 : 5) : 3;
      return (
        <React.Fragment key={mm}>
          <path d={`M${x} ${19 - len}V19`} stroke="#444" strokeWidth="1" />
          {major && mm <= 350 && (
            <text x={x + 1} y="12" fontSize="11" fill="#444">{mm}</text>
          )}
        </React.Fragment>
      );
    })}
    <path d="M893 0V19" stroke="#d4781c" strokeWidth="1.500" />
  </RulerSvg>
);
const V_TICKS = Array.from({ length: 80 }, (_, i) => i * 5 - 5);
const VRuler = () => (
  <RulerSvg width="19" height="688" viewBox="0 0 19 688">
    {V_TICKS.map((mm) => {
      const y = Math.round(22 + mm * 1.81) + 0.5;
      if (y < 0 || y > 688) return null;
      const major = mm % 50 === 0;
      const len = major ? 19 : mm % 10 === 0 ? 7 : 3;
      return (
        <React.Fragment key={mm}>
          <path d={`M${19 - len} ${y}H19`} stroke="#444" strokeWidth="1" />
          {major && (
            <text transform={`translate(12 ${y + 3 + String(mm).length * 6.500}) rotate(-90)`} fontSize="11" fill="#444">{mm}</text>
          )}
        </React.Fragment>
      );
    })}
    <path d="M0 565H19" stroke="#d4781c" strokeWidth="1.500" />
  </RulerSvg>
);

/* ---------- the satellite image on the printed page ---------- */
const MapLabel = ({ x, y, r, size = 21, light, children }) => (
  <text
    transform={`translate(${x} ${y}) rotate(${r})`}
    fontSize={size}
    fontWeight="700"
    fill={light ? "#cfe0e8" : "#fff"}
    stroke={light ? "#2a4a3a" : "#000"}
    strokeWidth={light ? 3 : 8}
    paintOrder="stroke"
  >
    {children}
  </text>
);
const Pin = ({ x, y, c = "#8ea9c4", s = 1 }) => (
  <g transform={`translate(${x} ${y}) scale(${s})`}>
    <path d="M-22 -4a22 22 0 0 1 44 0c0 12-10 16-16 34-6-10-28-18-28-34z" fill={c} />
    <ellipse cx="0" cy="-4" rx="11" ry="7" fill="#eef" />
  </g>
);
const MapImage = () => (
  <MapSvg viewBox="0 0 246 532" preserveAspectRatio="none">
    <defs>
      <filter id="blotch" x="0" y="0" width="100%" height="100%" colorInterpolationFilters="sRGB">
        <feTurbulence type="fractalNoise" baseFrequency="0.05" numOctaves="4" seed="11" />
        <feColorMatrix type="matrix" values="1.800 0 0 0 -0.400  1.800 0 0 0 -0.400  1.800 0 0 0 -0.400  0 0 0 0 1" />
      </filter>
      <filter id="grain" x="0" y="0" width="100%" height="100%" colorInterpolationFilters="sRGB">
        <feTurbulence type="fractalNoise" baseFrequency="0.4" numOctaves="2" seed="4" />
        <feColorMatrix type="matrix" values="2 0 0 0 -0.500  2 0 0 0 -0.500  2 0 0 0 -0.500  0 0 0 0 1" />
      </filter>
    </defs>
    <rect width="246" height="532" fill="#2b6844" />

    {/* upper part of the sheet */}
    <g transform="translate(-13 -4) scale(0.3333)">
      <path d="M155 125 190 115 225 190 200 215 165 170z" fill="#91806a" />
      <path d="M85 230 150 225 145 290 90 290z" fill="#7d8a68" />
      <path d="M165 260 240 285 215 325 170 300z" fill="#8d8e7e" />
      <path d="M360 345Q420 300 470 320L510 245 570 240 580 350 540 440 460 480 380 420z" fill="#1d4b3a" />
      <path d="M585 200 620 190 610 340 585 340z" fill="#204f3c" />
      <path d="M750 240 780 220 780 320 755 300z" fill="#235241" />
      <path d="M320 250 400 240 420 285 360 320 320 310z" fill="#3f8056" />
      <path d="M440 240 480 235 490 290 450 300z" fill="#4a8a5c" />
      <path d="M400 205 470 240 540 160 570 95 600 130M540 165 625 130M450 160 500 170" fill="none" stroke="#b0b2a2" strokeWidth="7" />
      <path d="M590 105 632 130 600 165 570 130z" fill="#8c7b66" />
      <path d="M420 180 470 175 450 220 420 215z" fill="#8c7b66" />
      <path d="M42 270 180 370 340 500 440 515 560 490 780 320" fill="none" stroke="#7b9380" strokeWidth="4" />
      <path d="M300 420 390 390 450 480 330 490z" fill="#5c8560" />
      <path d="M42 480 180 440 300 570 400 605 425 715 515 765 780 700V900H42z" fill="#4e7e5a" />
      <path d="M42 770 780 812" stroke="#a0a598" strokeWidth="4" />
      <path d="M150 770 145 900M230 770 220 900M170 620 160 770M42 720 130 640 200 600M260 680 290 770" stroke="#a8aa9e" strokeWidth="5" fill="none" />
      <path d="M70 480 130 490 120 560 85 570 70 530z" fill="#3f6a50" stroke="#8f968a" strokeWidth="3" />
      <path d="M340 860 780 840V885L360 885z" fill="#1e4f3a" />
      <path d="M42 860 90 850 85 900 42 900z" fill="#6d6155" />
      <path d="M620 470 780 418V452L640 490z" fill="#3d7f54" />
      <path d="M42 318 100 345 170 395 215 440 290 525 380 550 460 545 540 510 600 440 660 400 780 380V450L700 470 620 500 560 560 480 600 390 605 300 570 230 500 180 440 120 395 42 370z" fill="#020404" />
      <path d="M560 560 600 500 640 490 780 450V490L620 545z" fill="#3c4a44" />
      <path d="M470 590 560 545 590 560 500 598z" fill="#4d8a5c" />
      <path d="M310 595 445 612 425 715 295 640z" fill="#3f7f4f" />
      <path d="M445 612 560 600 640 565 760 503 778 565 760 605 725 715 515 765 425 715z" fill="#9a8a74" />
      <path d="M560 640 700 560 740 620 620 710z" fill="#a89882" />
      <path d="M610 20 300 270 60 470" fill="none" stroke="#a09d84" strokeWidth="9" />
      <path d="M310 595 445 612 560 600 640 565 760 503 778 565 760 605 725 715 515 765 425 715 295 640z" fill="none" stroke="#fff" strokeWidth="3.500" strokeDasharray="11 3" />
      <path d="M445 612 425 715" stroke="#fff" strokeWidth="3" strokeDasharray="9 3" />
      <path d="M455 570 405 795" stroke="#3fa0dc" strokeWidth="3" />
      <Pin x={183} y={252} />
      <Pin x={146} y={708} s={0.9} />
      <Pin x={236} y={698} s={0.95} />
      <Pin x={172} y={572} c="#d9a2b4" />
      <Pin x={50} y={462} c="#6f9bd6" s={0.6} />
      <MapLabel x={178} y={370} r={-37} size={25}>Route 122</MapLabel>
      <MapLabel x={62} y={352} r={-37} size={25}>al (1905)</MapLabel>
      <MapLabel x={268} y={692} r={-35} size={28}>École La Sapinière</MapLabel>
      <MapLabel x={378} y={790} r={4} size={22}>Rue Saint-Jean</MapLabel>
      <MapLabel x={62} y={788} r={-40} size={26}>e Fost</MapLabel>
      <MapLabel x={60} y={656} r={-34} size={24}>srivière</MapLabel>
      <MapLabel x={62} y={700} r={-38} size={24}>Clichée</MapLabel>
      <g transform="translate(586 652)">
        <path d="M0 -22V22M-22 0H22" stroke="#222" strokeWidth="3" />
        <circle r="10" fill="#fff" stroke="#222" strokeWidth="3" />
      </g>
      <text x="606" y="660" fontSize="20" fill="#111" stroke="#fff" strokeWidth="3" paintOrder="stroke">1</text>
      <text x="370" y="657" fontSize="18" fill="#222">2</text>
    </g>

    {/* lower part of the sheet */}
    <g transform="translate(-13 266) scale(0.3333)">
      <path d="M42 45 90 45 85 130 42 125z" fill="#7b6a58" />
      <path d="M42 345 105 340 100 530 42 530z" fill="#8a7d6a" />
      <path d="M42 600 100 600 100 795 42 795z" fill="#a29478" />
      <path d="M42 535 100 535 100 595 42 595z" fill="#5e7a5e" />
      <path d="M115 385 320 390 330 360 600 555 780 650V800H115z" fill="#3c8c50" />
      <path d="M330 400 470 450 620 570 480 650 330 620z" fill="#3f7058" />
      <path d="M240 40 780 55V90L240 70z" fill="#1f4f3a" />
      <path d="M355 85 445 85 445 180 360 150z" fill="#1e5038" />
      <path d="M470 95 545 90 540 280 460 230z" fill="#2e7548" />
      <path d="M555 90 780 100V290L545 280z" fill="#388450" />
      <path d="M115 20 200 10 220 100 180 130 120 135z" fill="#66806a" />
      <path d="M230 70 555 80 540 285 780 295M215 110 530 290 780 370M545 90 540 285M330 360 780 650M115 0 100 800" fill="none" stroke="#a0a392" strokeWidth="6" />
      <path d="M380 72 555 82" stroke="#c4a684" strokeWidth="8" />
      <path d="M42 175 110 150 200 195 290 240 360 300 450 315 520 370 620 395 780 450V480L680 440 560 415 500 385 430 350 350 320 300 285 240 240 130 180 42 210z" fill="#020404" />
      <path d="M545 425 780 470V490L610 545 580 510z" fill="#5c7e5e" />
      <path d="M540 420 575 520 610 555 700 530 780 495" fill="none" stroke="#050808" strokeWidth="7" />
      <path d="M680 590 780 525V640z" fill="#6c5e50" />
      <path d="M130 207 215 235 275 270 330 320 322 352 120 290 120 232z" fill="#a8947e" />
      <path d="M115 310 180 325 180 352 115 335z" fill="#a8947e" />
      <path d="M230 340 315 370 315 400 230 380z" fill="#a8947e" />
      <path d="M120 355 205 385 205 575 195 590 130 578 118 420z" fill="#a8947e" />
      <path d="M205 385 318 402 318 372" fill="none" stroke="#fff" strokeWidth="3" strokeDasharray="10 3" />
      <g fill="none" stroke="#fff" strokeWidth="3.500" strokeDasharray="11 3">
        <path d="M130 207 215 235 275 270 330 320 322 352 120 290 120 232z" />
        <path d="M115 310 180 325 180 352 115 335z" />
        <path d="M230 340 315 370 315 400 230 380z" />
        <path d="M120 355 205 385 205 575 195 590 130 578 118 420z" />
      </g>
      <path d="M147 375V585M180 380V588" stroke="#fff" strokeWidth="4" />
      <path d="M80 243 362 331" stroke="#3fa0dc" strokeWidth="2.500" />
      <path d="M120 254 325 318" stroke="#fff" strokeWidth="3.500" />
      <circle cx="182" cy="308" r="8" fill="#fff" stroke="#222" strokeWidth="3" />
      <path d="M182 288V330" stroke="#222" strokeWidth="2" />
      <MapLabel x={408} y={416} r={-32} size={24} light>La Petite Île</MapLabel>
      <MapLabel x={592} y={526} r={-37} size={22} light>La Prairie</MapLabel>
    </g>

    <NoiseRect width="246" height="532" filter="url(#blotch)" $mode="soft-light" $op={0.5} />
    <NoiseRect width="246" height="532" filter="url(#grain)" $mode="overlay" $op={0.28} />
  </MapSvg>
);

/* ---------- data ---------- */
const TOOLBAR_A = [
  ["save"], ["sep"], ["layoutNew"], ["dup"], ["manager"], ["open"], ["saveAs"], ["sep"], ["newDoc"], ["sep"],
  ["print"], ["expImg"], ["expSvg"], ["expPdf"], ["undo"], ["redo"], ["handle"], ["atlas"], ["first"], ["prev"],
  ["combo"], ["next"], ["last"], ["printOff"], ["expAtlas"], ["atlasCfg"],
];
const TOOLBAR_B = ["zoomIn", "zoomOut", "zoom100", "zoomFull", "refresh", "handle", "lock", "unlock", "group", "ungroup", "raise", "align", "dist", "resize"];
const SIDE_TOOLS = ["hand", "zoomTool", "select", "moveContent", "editNodes", "addMap", "add3d", "addPic", "addLabel", "addLegend", "addScale", "addNorth", "addShape", "addArrow", "addNode", "addHtml", "addTable"];
const TREE_ROWS = [
  ["Total", "label"],
  ["Légende", "legend"],
  ["<Barre d'échelle>", "scale"],
  ["Carte 1", "map"],
  ["Année des image(s): 20xx", "label"],
  ["Réalisé par:", "label"],
  ["Total", "label"],
  ["etiquette_total", "label", true],
];
const TREE_ICONS = { label: <LabelItem />, legend: <LegendItem />, scale: <ScaleItem />, map: <MapItem /> };
const FIELD_ROWS = [
  ["", "4,47", "4,47"],
  ["", "2,69", "2,49"],
  ["", "0,34", "0,32"],
  ["1", "10,13", "9,75"],
  ["2", "2,14", "2,11"],
];
const EMPTY_ROWS = Array.from({ length: 33 });
const BASE_LEFT = [
  <><path d="M1 6l6 12 8-13" fill="none" stroke="#333" strokeWidth="1.500" /><circle cx="7" cy="18" r="2" fill="#fff" stroke="#333" /><circle cx="15" cy="5" r="2" fill="#fff" stroke="#333" /><circle cx="21" cy="5" r="2" fill="#fff" stroke="#333" /><Plus /></>,
  <><rect x="0" y="0" width="20" height="20" fill="#6f9bc7" /><path d="M0 0h7v7H0zM14 0h6v7h-6zM7 7h7v7H7zM0 14h7v6H0z" fill="#23404f" /><Plus /></>,
  <><rect x="0" y="1" width="20" height="18" fill="#8fb0cc" stroke="#33495c" /><path d="M0 10h20M10 1v18M0 1l10 9" stroke="#33495c" /><Plus /></>,
  <><path d="M6 2c5 0 8 4 6 9-1 4-4 7-8 8 2-3 3-5 3-7-3 0-5-2-5-5 0-3 2-5 4-5z" fill="#3f6a9c" /><Plus /></>,
  <><path d="M1 22C4 12 12 3 24 1c-2 10-10 17-19 16z" fill="#9ab8d4" stroke="#3f6a9c" /><Plus /></>,
  <><rect x="1" y="2" width="20" height="19" rx="2" fill="#bcd4e6" stroke="#8aa" /><path d="M5 6l5 11 6-11" fill="none" stroke="#333" /><Plus /></>,
  <><path d="M4 3c6-4 14-2 15 4 1 5-3 9-6 9l-2 6-2-6C5 14 1 8 4 3z" fill="#315f94" /><Plus /></>,
  <><circle cx="11" cy="11" r="11" fill="#8fb0cc" stroke="#5f87b5" /><path d="M4 7l5 1 2-4 3 8-6 3z" fill="#2f4f6f" /><Plus /></>,
  <><circle cx="11" cy="11" r="11" fill="#3b5775" /><path d="M0 11h22M11 0v22M3 5h16M3 17h16" stroke="#b5cbe0" strokeWidth="1.500" /><Plus /></>,
  <><circle cx="11" cy="11" r="11" fill="#dfeaf4" stroke="#7aa2cc" /><path d="M5 6l6 11 6-11M0 11h22" fill="none" stroke="#444" /><Plus /></>,
  <><rect x="2" y="6" width="20" height="13" rx="1" fill="#5f87b5" /><path d="M6 2v22M11 2v22M16 2v22" stroke="#334" /><rect x="2" y="6" width="20" height="13" rx="1" fill="#5f87b5" /><Gear /></>,
];

const App = () => (
  <Desktop>
    <GlobalStyle />

    {/* QGIS main window, mostly hidden behind the layout window */}
    <BaseWindow>
      <TitleBar $h={28} $pad={5} $gap={5} $pb={3}>
        <Qgis />
        <TitleText>*ClientA - QGIS</TitleText>
        <WinButtons $gap={33} $right={16}>
          <Minus />
          <Maxi s={11} />
          <Closer />
        </WinButtons>
      </TitleBar>
      <Menu $h={19} $pad={7}>
        <MenuItem $gap={12}>Projet</MenuItem>
      </Menu>
      <BaseBand $gap={12}>
        <Handle $w={5} />
        <Ic s={22}><rect x="2" y="1" width="22" height="21" fill="#fff" stroke="#777" /></Ic>
      </BaseBand>
      <BaseBand $gap={4}>
        <Handle $w={5} />
        <Ic s={24}><path d="M4 6l14-3 4 14-14 4z" fill="#c98a28" /><path d="M9 5l9-2 4 10-9 3z" fill="#5f87b5" /></Ic>
      </BaseBand>
      <BaseBand $gap={6}>
        <Handle $w={5} />
        <Ic s={24}><path d="M3 1v21h21z" fill="#eee" stroke="#bbb" /></Ic>
      </BaseBand>
      <BaseMain>
        <BaseLeft>
          <LeftBand>
            <Handle $w={5} />
            <Ic s={22}><path d="M2 20c1-9 6-16 20-18" fill="none" stroke="#d4d4d4" strokeWidth="1.500" /></Ic>
          </LeftBand>
          <BaseLeftHandle />
          {BASE_LEFT.map((icon, i) => (
            <BaseLeftIcon key={i}>
              <Ic s={23}>{icon}</Ic>
            </BaseLeftIcon>
          ))}
        </BaseLeft>
        <BaseSpacer />
        <BaseDock>
          <BaseDockBlock $h={38} />
          <BaseDockBlock $h={52} $line $gap={2} $right={1}>
            <Float />
            <DockClose />
          </BaseDockBlock>
          <BaseDockBlock $h={19} $line $bg="#ececec" />
          <BaseDockBlock $h={137} $line $bg="#fff" />
          <BaseDockBlock $h={14} $bg="#e6e6e6" $right={5}>
            <SideArrow />
          </BaseDockBlock>
          <BaseDockBlock $h={8} />
          <BaseDockBlock $h={21} $bg="#fff" $right={12} $line $under>
            <Caret />
          </BaseDockBlock>
          <BaseDockBlock $h={10} />
          <BaseDockBlock $h={21}>
            <AideBtn>Aide</AideBtn>
          </BaseDockBlock>
          <BaseDockBlock $h={12} />
          <BaseDockBlock $h={24} $gap={2} $right={1}>
            <Float />
            <DockClose />
          </BaseDockBlock>
          <BaseDockBlock $h={50} />
          <BaseTextArea>
            <ThinScroll>
              <UpCaret />
              <Caret />
            </ThinScroll>
          </BaseTextArea>
          <BaseStatus>
            <span>522</span>
            <MsgBubble />
          </BaseStatus>
        </BaseDock>
      </BaseMain>
    </BaseWindow>
    <SearchBox>
      <SearchIc />
    </SearchBox>

    {/* Print layout window */}
    <LayoutWindow>
      <TitleBar $h={30} $pad={6} $gap={6} $pb={2}>
        <Qgis s={17} />
        <TitleText>*Legal</TitleText>
        <WinButtons $gap={33} $right={17}>
          <Minus />
          <Maxi />
          <Closer />
        </WinButtons>
      </TitleBar>
      <Menu $h={20} $pad={10}>
        <MenuItem $gap={13.5}><u>M</u>ise en page</MenuItem>
        <MenuItem $gap={13.5}><u>É</u>diter</MenuItem>
        <MenuItem $gap={13.5}>V<u>u</u>e</MenuItem>
        <MenuItem $gap={13.5}><u>É</u>léments</MenuItem>
        <MenuItem $gap={13.5}><u>A</u>jouter un objet</MenuItem>
        <MenuItem $gap={13.5}>A<u>t</u>las</MenuItem>
        <MenuItem $gap={13.5}>Paramètres</MenuItem>
      </Menu>
      <Toolbar $h={39}>
        <Handle $w={9} />
        {TOOLBAR_A.map(([name], i) => {
          if (name === "sep") return <Sep key={i} />;
          if (name === "handle") return <Handle key={i} $w={16} $end $pr={2} />;
          if (name === "combo")
            return (
              <PageCombo key={i}>
                <ComboValue>1</ComboValue>
                <ComboDrop><Caret $c="#999" /></ComboDrop>
              </PageCombo>
            );
          return (
            <ToolBtn key={i}>
              <Ic>{icons[name]}</Ic>
            </ToolBtn>
          );
        })}
      </Toolbar>
      <Toolbar $h={38}>
        <Handle $w={9} />
        {TOOLBAR_B.map((name, i) =>
          name === "handle" ? (
            <Handle key={i} $w={17} />
          ) : (
            <ToolBtn key={i}>
              <Ic>{icons[name]}</Ic>
            </ToolBtn>
          )
        )}
      </Toolbar>

      <MainRow>
        <ToolColumn>
          <ToolHandle />
          {SIDE_TOOLS.map((name) => (
            <SideTool key={name} $on={name === "select"}>
              {name === "hand" ? (
                <Hand size={23} color="#222" fill="#fff" strokeWidth={1.500} />
              ) : (
                <Ic>{icons[name]}</Ic>
              )}
            </SideTool>
          ))}
        </ToolColumn>

        <Center>
          <RulerRow>
            <Corner />
            <HRuler />
          </RulerRow>
          <CanvasRow>
            <VRuler />
            <Canvas>
              <Page>
                <Sheet>
                  <SheetHead>
                    <LogoCol>
                      <LogoCell>
                        <LogoRow>
                          <LogoMark>VIA</LogoMark>
                          <LogoLeaf><ViaLeaf /></LogoLeaf>
                        </LogoRow>
                        <LogoLine>Le réseau de</LogoLine>
                        <LogoLine>services agricoles</LogoLine>
                        <LogoLine>du Québec</LogoLine>
                      </LogoCell>
                    </LogoCol>
                    <LegendCol>
                      <LegendTitle>Légende</LegendTitle>
                      <LegendRow>
                        <CheckMini />
                        Contour de champ
                        <FossLine />
                        Fossé
                      </LegendRow>
                      <LegendRow>
                        <WellMark s={12} />
                        Puit
                      </LegendRow>
                    </LegendCol>
                    <InfoCol>
                      <InfoTop>
                        <InfoLeft>
                          <InfoCell $h={14}>Centre de<br />service:</InfoCell>
                          <InfoCell $h={16}>Zone:</InfoCell>
                          <InfoCell $h={15}>Territoire:</InfoCell>
                        </InfoLeft>
                        <NorthCell>
                          <NorthArrow />
                        </NorthCell>
                      </InfoTop>
                      <InfoCell $h={12}>Année:</InfoCell>
                      <InfoCell $h={13}>Client:</InfoCell>
                      <InfoCell $h={10} $open>Diagramme:<StrongNum>1</StrongNum></InfoCell>
                    </InfoCol>
                  </SheetHead>
                  <SheetBody>
                    <MapImage />
                    <SideInfo>
                      <TableRow $h={23}>
                        <TableCell>Champ</TableCell>
                        <TableCell>Sup. (ha)</TableCell>
                        <TableCell $last>Sup.<br />épandable<br />(ha)</TableCell>
                      </TableRow>
                      {FIELD_ROWS.map((row, i) => (
                        <TableRow key={i}>
                          <TableCell>{row[0]}</TableCell>
                          <TableCell $c="#8a7430">{row[1]}</TableCell>
                          <TableCell $last $c="#8a7430">{row[2]}</TableCell>
                        </TableRow>
                      ))}
                      {EMPTY_ROWS.map((_, i) => (
                        <TableRow key={i}>
                          <TableCell />
                          <TableCell />
                          <TableCell $last />
                        </TableRow>
                      ))}
                      <TableRow>
                        <TableCell $fs={5.6}>Total :</TableCell>
                        <TableCell $fs={5.6}>19,43</TableCell>
                        <TableCell $last $fs={5.6}>18,82</TableCell>
                      </TableRow>
                      <TableRow $h={6} $open>
                        <TableCell />
                        <TableCell />
                        <TableCell $last />
                      </TableRow>
                      <SideNotes>
                        <NoteLine $u>Location(s):</NoteLine>
                        <NoteLine $u $mt={12}>Drainage:</NoteLine>
                        <NoteLine $b>Drainée(s):</NoteLine>
                        <NoteLine $b $mt={1}>Non drainée(s):</NoteLine>
                        <NoteLine $u $mt={8}>Municipalité:</NoteLine>
                        <ScaleLabels>
                          <ScaleLabel>0</ScaleLabel>
                          <ScaleLabel>80</ScaleLabel>
                          <ScaleLabel>160</ScaleLabel>
                          <ScaleLabel>240</ScaleLabel>
                          <ScaleLabel>320 m</ScaleLabel>
                        </ScaleLabels>
                        <ScaleBar>
                          <ScaleSeg />
                          <ScaleSeg />
                          <ScaleSeg />
                          <ScaleSeg />
                        </ScaleBar>
                      </SideNotes>
                    </SideInfo>
                  </SheetBody>
                </Sheet>
                <PageFoot>
                  <span>Année des image(s): 20xx</span>
                  <span>Version du 2020-08-19</span>
                  <span>Réalisé par :</span>
                </PageFoot>
              </Page>
            </Canvas>
          </CanvasRow>
        </Center>

        <DockSplit>
          <SplitGrip />
        </DockSplit>

        <Dock>
          <TabRow $h={24}>
            <Tab $w={67} $hOn={24} $on>Éléments</Tab>
            <Tab $w={71} $hOn={24}>Historique</Tab>
          </TabRow>
          <PanelHead $h={20}>
            <PanelName>Éléments</PanelName>
            <PanelBtns>
              <Float />
              <DockClose />
            </PanelBtns>
          </PanelHead>
          <Tree>
            <TreeMain>
              <TreeHead>
                <HeadCell $pl={3}><Eye /></HeadCell>
                <HeadCell $pl={3}><Padlock /></HeadCell>
                <HeadCell $txt $pl={2}>Objet</HeadCell>
              </TreeHead>
              {TREE_ROWS.map(([name, kind, locked], i) => (
                <TreeRow key={i}>
                  <CheckCell $pl={4}>
                    <CheckBox><Tick /></CheckBox>
                  </CheckCell>
                  <CheckCell $pl={4}>
                    <CheckBox>{locked && <Tick />}</CheckBox>
                  </CheckCell>
                  <RowIcon>{TREE_ICONS[kind]}</RowIcon>
                  <RowName>{name}</RowName>
                </TreeRow>
              ))}
            </TreeMain>
            <TreeScroll>
              <ScrollBtn $h={19}><UpCaret /></ScrollBtn>
              <ScrollThumb />
              <ScrollTrack />
              <ScrollBtn $h={17}><Caret /></ScrollBtn>
            </TreeScroll>
          </Tree>
          <SplitDots />
          <TabRow $h={23}>
            <Tab $w={87} $hOn={23}>Mise en page</Tab>
            <Tab $w={121} $hOn={23} $on>Propriétés de l'objet</Tab>
            <Tab $w={55} $hOn={23}>Guides</Tab>
            <Tab $w={47} $hOn={23}>Atlas</Tab>
          </TabRow>
          <PanelHead $h={24}>
            <PanelName>Propriétés de l'objet</PanelName>
            <PanelBtns>
              <Float />
              <DockClose />
            </PanelBtns>
          </PanelHead>
          <DockFill />
        </Dock>
      </MainRow>

      <Status>
        <StatusText $ml={884} $w={107}>x: 334.114 mm</StatusText>
        <StatusText $w={105}>y: 299.322 mm</StatusText>
        <StatusText $w={107}>page: 1</StatusText>
        <ZoomCombo>
          <ZoomValue>47.9%</ZoomValue>
          <ZoomDrop><Caret /></ZoomDrop>
        </ZoomCombo>
        <SliderTrack>
          <SliderThumb />
        </SliderTrack>
      </Status>
    </LayoutWindow>
  </Desktop>
);

export default App;
